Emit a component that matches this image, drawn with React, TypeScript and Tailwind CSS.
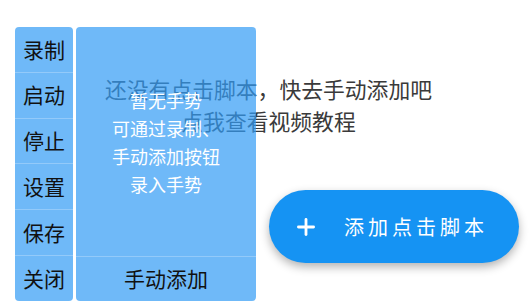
import { Plus } from "lucide-react";

const tools = ["录制", "启动", "停止", "设置", "保存", "关闭"];

const hints = ["暂无手势", "可通过录制、", "手动添加按钮", "录入手势"];

const ToolColumn = () => (
    <div className="w-[58px] h-[274px] flex flex-col rounded-[4px] bg-[rgba(50,155,245,0.7)]">
        {tools.map((label, i) => (
            <div
                key={label}
                className={`flex-1 flex items-center justify-center text-[21px] text-[#111] ${i > 0 ? "border-t border-white/25" : ""}`}
            >
                {label}
            </div>
        ))}
    </div>
);

const GesturePanel = () => (
    <div className="w-[180px] h-[274px] flex flex-col rounded-[4px] bg-[rgba(50,155,245,0.7)]">
        <div className="flex-1 flex flex-col items-center justify-center text-white text-[18px] leading-[28px]">
            {hints.map((line) => (
                <div key={line}>{line}</div>
            ))}
        </div>
        <div className="h-[45px] flex items-center justify-center border-t border-white/25 text-[21px] text-[#111]">
            手动添加
        </div>
    </div>
);

export default function App() {
    return (
        <div
            className="relative w-[530px] h-[307px] bg-white overflow-hidden"
            style={{ fontFamily: '"Noto Sans CJK SC", "Noto Sans", sans-serif' }}
        >
            <div className="pt-[73px] pl-[7px] text-center text-[21.8px] leading-[32px] text-[#3a3a3a]">
                <div>还没有点击脚本，快去手动添加吧</div>
                <div>点我查看视频教程</div>
            </div>

            <div className="absolute left-[15px] top-[27px] flex gap-[3px]">
                <ToolColumn />
                <GesturePanel />
            </div>

            <button className="absolute left-[269px] top-[190px] w-[250px] h-[73px] rounded-full bg-[#1593f3] shadow-[0_4px_10px_rgba(0,0,0,0.3)] flex items-center text-white">
                <Plus className="ml-[24px] w-[26px] h-[26px]" strokeWidth={2.6} />
                <span className="ml-[25px] text-[20px] tracking-[4px]">添加点击脚本</span>
            </button>
        </div>
    );
}
